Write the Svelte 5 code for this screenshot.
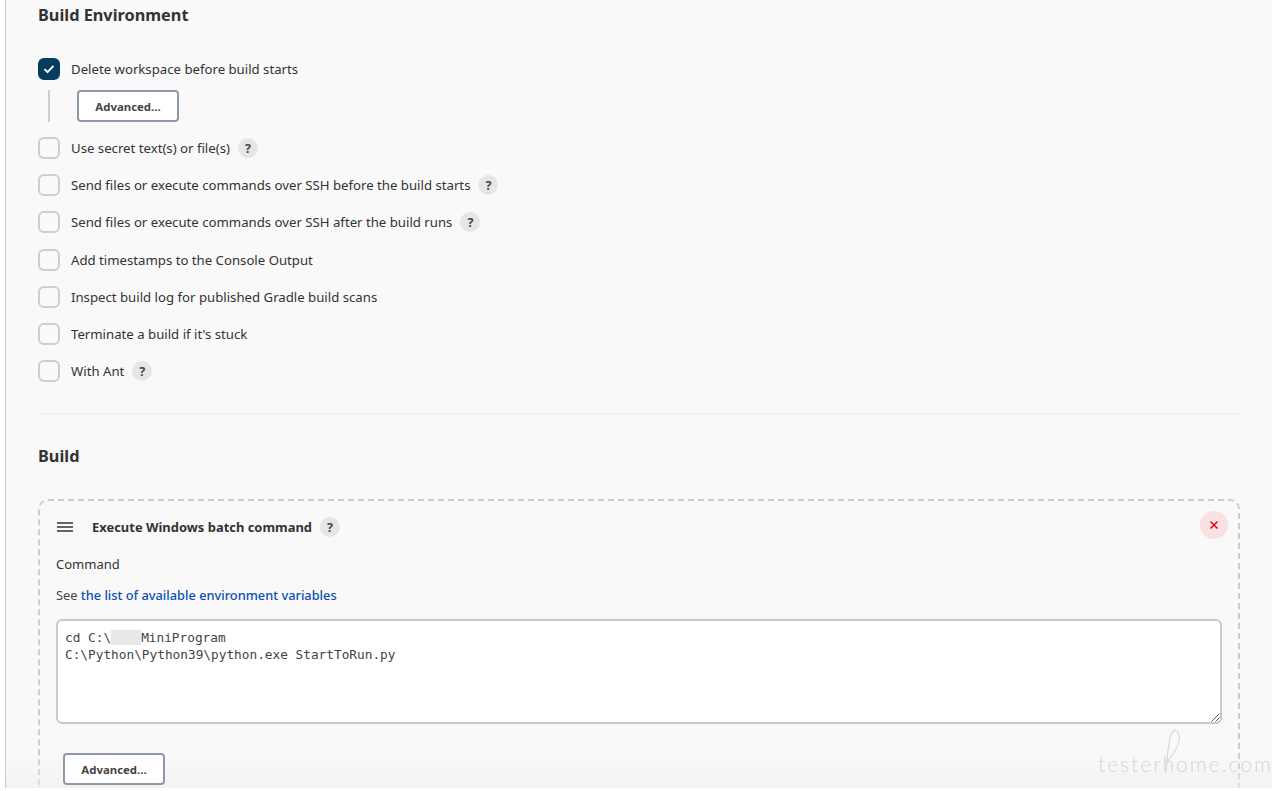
<script>
  const options = [
    { label: 'Use secret text(s) or file(s)', help: true },
    { label: 'Send files or execute commands over SSH before the build starts', help: true },
    { label: 'Send files or execute commands over SSH after the build runs', help: true },
    { label: 'Add timestamps to the Console Output', help: false },
    { label: 'Inspect build log for published Gradle build scans', help: false },
    { label: "Terminate a build if it's stuck", help: false },
    { label: 'With Ant', help: true }
  ];
</script>

<div class="page">
  <main class="main">
    <h2 class="title first">Build Environment</h2>

    <div class="row checked-row">
      <span class="check on">
        <svg width="12" height="10" viewBox="0 0 12 10"><path d="M1.5 5.2 4.5 8.2 10.5 1.8" fill="none" stroke="#fff" stroke-width="1.9"/></svg>
      </span>
      <span class="label">Delete workspace before build starts</span>
    </div>
    <div class="nested">
      <button class="btn">Advanced...</button>
    </div>

    <div class="options">
      {#each options as o}
        <div class="row">
          <span class="check"></span>
          <span class="label">{o.label}</span>
          {#if o.help}<span class="help">?</span>{/if}
        </div>
      {/each}
    </div>

    <hr class="sep" />

    <h2 class="title">Build</h2>

    <section class="card">
      <div class="card-head">
        <svg class="grip" width="16" height="10" viewBox="0 0 16 10"><path d="M0 1h16M0 5h16M0 9h16" stroke="#333" stroke-width="1.3"/></svg>
        <span class="card-title">Execute Windows batch command</span>
        <span class="help">?</span>
        <span class="close">
          <svg width="10" height="10" viewBox="0 0 10 10"><path d="M1.5 1.5 8.5 8.5M8.5 1.5 1.5 8.5" stroke="#e6001f" stroke-width="1.5"/></svg>
        </span>
      </div>
      <div class="field-label">Command</div>
      <div class="see">See <a href="#env">the list of available environment variables</a></div>
      <div class="editor">
        <div class="code"><div>cd C:\<span class="redact"></span>MiniProgram</div><div>C:\Python\Python39\python.exe StartToRun.py</div></div>
        <svg class="grab" width="10" height="10" viewBox="0 0 10 10"><path d="M9.5 1.5 1.5 9.5M9.5 5.5 5.5 9.5" stroke="#555" stroke-width="1"/></svg>
      </div>
      <div class="card-foot">
        <button class="btn">Advanced...</button>
      </div>
    </section>

    <div class="fade"></div>
    <div class="mark">
      <span>testerhome.com</span>
      <svg class="loop" width="18" height="44" viewBox="0 0 18 44"><path d="M2 44C3 30 4 8 9 2c4-3 7 4 6 10-1 7-8 16-12 21" fill="none" stroke="#d8d8d8" stroke-width="1.2"/></svg>
    </div>
  </main>
</div>

<style>
  :global(body) {
    margin: 0;
    background: #fff;
  }
  .page {
    height: 791px;
    overflow: hidden;
    font-family: "Noto Sans", "Open Sans", sans-serif;
    color: #333;
  }
  .main {
    position: relative;
    box-sizing: border-box;
    height: 788px;
    margin-left: 5px;
    border-left: 1px solid #c3ccd1;
    background: #f9f9f9;
    padding: 0 32px;
    overflow: hidden;
  }
  .title {
    margin: 0;
    font-size: 16.3px;
    font-weight: 700;
    line-height: 24px;
    color: #333;
    margin-bottom: 31px;
  }
  .title.first {
    margin-top: 3px;
  }
  .row {
    display: flex;
    align-items: center;
    height: 22px;
  }
  .check {
    box-sizing: border-box;
    width: 22px;
    height: 22px;
    border: 2px solid #c6d0d6;
    border-radius: 6px;
    background: #fafafa;
    flex: none;
    display: flex;
    align-items: center;
    justify-content: center;
  }
  .check.on {
    background: #063c5e;
    border-color: #063c5e;
  }
  .label {
    margin-left: 11px;
    font-size: 13.2px;
    color: #333;
    white-space: nowrap;
  }
  .help {
    margin-left: 8px;
    width: 20px;
    height: 20px;
    border-radius: 50%;
    background: #e6e6e6;
    color: #444;
    font-size: 12.5px;
    font-weight: 700;
    display: flex;
    align-items: center;
    justify-content: center;
    flex: none;
  }
  .nested {
    margin-top: 10px;
    margin-left: 10px;
    padding-left: 27px;
    border-left: 2px solid #c6d0d6;
    height: 32px;
  }
  .btn {
    box-sizing: border-box;
    display: block;
    width: 102px;
    height: 32px;
    border: 2px solid #8c99a8;
    border-radius: 4px;
    background: #fff;
    color: #444;
    font-family: inherit;
    font-size: 11.4px;
    font-weight: 700;
    padding: 0;
  }
  .options {
    margin-top: 15px;
    display: flex;
    flex-direction: column;
    gap: 15.2px;
  }
  .sep {
    margin: 31px 0 0;
    border: 0;
    border-top: 1px solid #eeeeee;
  }
  .sep + .title {
    margin-top: 30px;
    margin-bottom: 31px;
  }
  .card {
    box-sizing: border-box;
    border: 2px dashed #c6d0d6;
    border-radius: 10px;
    padding: 0 16px;
    height: 400px;
  }
  .card-head {
    display: flex;
    align-items: center;
    height: 22px;
    margin-top: 15px;
  }
  .grip {
    margin-left: 1px;
    flex: none;
  }
  .card-title {
    margin-left: 19px;
    font-size: 12.95px;
    font-weight: 700;
    color: #333;
    white-space: nowrap;
  }
  .close {
    margin-left: auto;
    margin-right: -6px;
    width: 28px;
    height: 28px;
    border-radius: 50%;
    background: #f8e1e3;
    display: flex;
    align-items: center;
    justify-content: center;
    flex: none;
    transform: translateY(-2px);
  }
  .field-label {
    margin-top: 17px;
    font-size: 13px;
    line-height: 18px;
    color: #333;
  }
  .see {
    margin-top: 13px;
    font-size: 12.8px;
    line-height: 18px;
    color: #444;
  }
  .see a {
    color: #0b4fb3;
    text-decoration: none;
    font-weight: 500;
  }
  .editor {
    position: relative;
    box-sizing: border-box;
    margin-top: 15px;
    height: 105px;
    width: 1166px;
    border: 2px solid #c3ccd1;
    border-radius: 6px;
    background: #fff;
    padding: 8px 7px;
  }
  .code {
    font-family: "DejaVu Sans Mono", "Liberation Mono", monospace;
    font-size: 12.77px;
    line-height: 17px;
    color: #444;
    white-space: pre;
  }
  .redact {
    display: inline-block;
    width: 30px;
    height: 15px;
    vertical-align: -3px;
    background: #e8e8e8;
  }
  .grab {
    position: absolute;
    right: 0;
    bottom: 0;
  }
  .card-foot {
    position: relative;
    z-index: 1;
    margin-top: 29px;
    margin-left: 7px;
  }
  .fade {
    position: absolute;
    left: 0;
    right: 0;
    bottom: 0;
    height: 34px;
    background: linear-gradient(to bottom, rgba(238,238,238,0), rgba(238,238,238,0.6));
    pointer-events: none;
  }
  .mark {
    position: absolute;
    top: 751px;
    left: 1092px;
    width: 178px;
    font-family: "Lato", sans-serif;
    font-weight: 300;
    font-size: 21px;
    letter-spacing: 2px;
    color: #d6d6d6;
    white-space: nowrap;
    line-height: 26px;
    pointer-events: none;
    z-index: 2;
  }
  .loop {
    position: absolute;
    left: 66px;
    top: -22px;
  }
</style>
